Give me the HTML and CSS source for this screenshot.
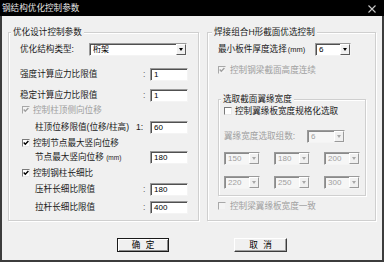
FILE: index.html
```html
<!DOCTYPE html>
<html lang="zh-CN">
<head>
<meta charset="utf-8">
<title>钢结构优化控制参数</title>
<link rel="stylesheet" href="styles.css">
</head>
<body>
<div class="window">
  <div class="titlebar">
    <span class="title">钢结构优化控制参数</span>
    <svg class="close" viewBox="0 0 8 8"><path d="M0.5 0.5L7.5 7.5M7.5 0.5L0.5 7.5" stroke="#c8c8c8" stroke-width="1.1" fill="none"/></svg>
  </div>
  <div class="client">
    <div class="panels">
      <div class="group group-left">
        <div class="group-title gt-left">优化设计控制参数</div>
        <div class="row m5">
          <span class="lbl w-type">优化结构类型:</span>
          <div class="combo combo-type"><span class="combo-val">桁架</span><span class="combo-btn"><i class="tri"></i></span></div>
        </div>
        <div class="field m12"><span class="lbl">强度计算应力比限值</span><span class="sep">:</span><span class="input">1</span></div>
        <div class="field m8"><span class="lbl">稳定计算应力比限值</span><span class="sep">:</span><span class="input">1</span></div>
        <div class="cbrow m2 dis"><span class="cb cb-left dis-box"><svg viewBox="0 0 6 6"><path d="M0.7 2.6L2.3 4.3L5.4 1.1" stroke="#a0a0a0" stroke-width="1.4" fill="none"/></svg></span><span>控制柱顶侧向位移</span></div>
        <div class="field m5"><span class="lbl indent">柱顶位移限值(位移/柱高)</span><span class="sep sep-one">1:</span><span class="input">60</span></div>
        <div class="cbrow m3"><span class="cb cb-left"><svg viewBox="0 0 6 6"><path d="M0.7 2.6L2.3 4.3L5.4 1.1" stroke="#000" stroke-width="1.4" fill="none"/></svg></span><span>控制节点最大竖向位移</span></div>
        <div class="field m2"><span class="lbl indent">节点最大竖向位移 <span class="unit">(mm)</span></span><span class="sep"></span><span class="input">180</span></div>
        <div class="cbrow m3"><span class="cb cb-left"><svg viewBox="0 0 6 6"><path d="M0.7 2.6L2.3 4.3L5.4 1.1" stroke="#000" stroke-width="1.4" fill="none"/></svg></span><span>控制钢柱长细比</span></div>
        <div class="field m4"><span class="lbl indent">压杆长细比限值</span><span class="sep">:</span><span class="input">180</span></div>
        <div class="field m5"><span class="lbl indent">拉杆长细比限值</span><span class="sep">:</span><span class="input">400</span></div>
      </div>
      <div class="group group-right">
        <div class="group-title gt-right">焊接组合H形截面优选控制</div>
        <div class="row m5">
          <span class="lbl w-thick">最小板件厚度选择<span class="unit unit-r">(mm)</span></span>
          <div class="combo combo-thick"><span class="combo-val">6</span><span class="combo-btn"><i class="tri"></i></span></div>
        </div>
        <div class="cbrow m8 dis"><span class="cb dis-box"><svg viewBox="0 0 6 6"><path d="M0.7 2.6L2.3 4.3L5.4 1.1" stroke="#a0a0a0" stroke-width="1.4" fill="none"/></svg></span><span class="cbtext-r">控制钢梁截面高度连续</span></div>
        <div class="group inner m23">
          <div class="group-title gt-inner">选取截面翼缘宽度</div>
          <div class="cbrow"><span class="cb"></span><span>控制翼缘板宽度规格化选取</span></div>
          <div class="row m13 dis">
            <span class="lbl w-count">翼缘宽度选取组数:</span>
            <div class="combo dis-combo combo-count"><span class="combo-val">6</span><span class="combo-btn"><i class="tri"></i></span></div>
          </div>
          <div class="combos m9">
            <div class="combo dis-combo combo-sm"><span class="combo-val">150</span><span class="combo-btn"><i class="tri"></i></span></div>
            <div class="combo dis-combo combo-sm"><span class="combo-val">180</span><span class="combo-btn"><i class="tri"></i></span></div>
            <div class="combo dis-combo combo-sm"><span class="combo-val">200</span><span class="combo-btn"><i class="tri"></i></span></div>
          </div>
          <div class="combos m11">
            <div class="combo dis-combo combo-sm"><span class="combo-val">220</span><span class="combo-btn"><i class="tri"></i></span></div>
            <div class="combo dis-combo combo-sm"><span class="combo-val">250</span><span class="combo-btn"><i class="tri"></i></span></div>
            <div class="combo dis-combo combo-sm"><span class="combo-val">300</span><span class="combo-btn"><i class="tri"></i></span></div>
          </div>
        </div>
        <div class="cbrow m4 dis"><span class="cb dis-box"></span><span class="cbtext-r">控制梁翼缘板宽度一致</span></div>
      </div>
    </div>
    <div class="btns">
      <div class="btn btn-default">确 定</div>
      <div class="btn btn-normal">取 消</div>
    </div>
  </div>
</div>
</body>
</html>
```
FILE: styles.css
```css
html, body {
  margin: 0;
  padding: 0;
  background: #ffffff;
}
body {
  font-family: "Liberation Sans", "Noto Sans CJK SC", sans-serif;
  font-size: 8.6px;
  color: #1a1a1a;
}
.window {
  width: 384px;
  height: 262px;
  display: flex;
  flex-direction: column;
  background: #000;
}
.titlebar {
  height: 16px;
  box-sizing: border-box;
  display: flex;
  align-items: center;
  justify-content: space-between;
  padding: 0 8px 0 2px;
  color: #e4e4e4;
  line-height: 12px;
}
.close {
  width: 8px;
  height: 8px;
  margin-top: 1px;
}
.client {
  flex: 1;
  background: #f0f0f0;
  border: 2px solid #3c3c3c;
  border-top: 0;
  display: flex;
  flex-direction: column;
}
.panels {
  display: flex;
  gap: 8px;
  padding: 16px 0 0 6px;
}
.group {
  box-sizing: border-box;
  border: 1px solid #cfcfcf;
  box-shadow: inset 1px 1px 0 #fff, 1px 1px 0 #fff;
  display: flex;
  flex-direction: column;
  height: 189px;
}
.group-left {
  width: 191px;
  padding: 0 10px 0 11px;
}
.group-right {
  width: 169px;
  padding: 0 9px 0 10px;
}
.inner {
  width: 148px;
  height: 97px;
  padding: 0 0 0 5px;
}
.group-title {
  align-self: flex-start;
  margin-top: -6px;
  padding: 0 2px;
  line-height: 11px;
  background: #f0f0f0;
  white-space: nowrap;
}
.gt-left { margin-left: -9px; }
.gt-right { margin-left: -6px; }
.gt-inner { margin-left: -3px; }

.m2 { margin-top: 2px; }
.m3 { margin-top: 3px; }
.m4 { margin-top: 4px; }
.m5 { margin-top: 5px; }
.m8 { margin-top: 8px; }
.m9 { margin-top: 9px; }
.m11 { margin-top: 11px; }
.m12 { margin-top: 12px; }
.m13 { margin-top: 13px; }
.m23 { margin-top: 23px; }

.row {
  display: flex;
  align-items: center;
  height: 13px;
  white-space: nowrap;
}
.lbl {
  white-space: nowrap;
  line-height: 11px;
}
.unit {
  font-size: 6.5px;
}
.unit-r {
  font-size: 7.5px;
  margin-left: 1px;
}
.w-type { width: 69px; }
.w-thick { width: 97px; }
.w-count { width: 83px; }

.field {
  display: grid;
  grid-template-columns: 1fr 12px 38px;
  align-items: center;
  height: 13px;
}
.sep {
  padding-left: 5px;
  color: #666;
  line-height: 11px;
}
.sep-one {
  padding-left: 0;
  margin-left: -2px;
  color: #1a1a1a;
}
.indent { padding-left: 15px; }

.input {
  box-sizing: border-box;
  height: 13px;
  background: #fff;
  border: 1px solid;
  border-color: #9a9a9a #f4f4f4 #f4f4f4 #9a9a9a;
  box-shadow: inset 1px 1px 0 #505050;
  padding-left: 3px;
  font-size: 8px;
  line-height: 11px;
  color: #000;
}

.combo {
  box-sizing: border-box;
  height: 13px;
  display: flex;
  background: #fff;
  border: 1px solid;
  border-color: #9a9a9a #f4f4f4 #f4f4f4 #9a9a9a;
  box-shadow: inset 1px 1px 0 #505050;
}
.combo-type { width: 98px; }
.combo-thick { width: 36px; }
.combo-count { width: 38px; }
.combo-sm { width: 36px; }
.combo-val {
  flex: 1;
  padding-left: 3px;
  font-size: 8px;
  line-height: 11px;
  color: #000;
}
.combo-btn {
  width: 10px;
  box-sizing: border-box;
  background: #f0f0f0;
  border: 1px solid;
  border-color: #ffffff #5a5a5a #5a5a5a #ffffff;
  display: flex;
  align-items: center;
  justify-content: center;
}
.tri {
  width: 0;
  height: 0;
  border-left: 2.5px solid transparent;
  border-right: 2.5px solid transparent;
  border-top: 3px solid #000;
}
.dis-combo {
  background: #f6f6f6;
  box-shadow: inset 1px 1px 0 #8a8a8a;
}
.dis-combo .combo-val { color: #a0a0a0; }
.dis-combo .tri { border-top-color: #a8a8a8; }
.dis-combo .combo-btn { border-color: #ffffff #9a9a9a #9a9a9a #ffffff; }

.combos {
  display: flex;
  justify-content: space-between;
  width: 136px;
}

.cbrow {
  display: flex;
  align-items: center;
  height: 12px;
  gap: 3px;
  white-space: nowrap;
  line-height: 11px;
}
.cb {
  box-sizing: border-box;
  width: 8px;
  height: 8px;
  background: #fff;
  border: 1px solid;
  border-color: #7a7a7a #e8e8e8 #e8e8e8 #7a7a7a;
  display: flex;
}
.cb svg {
  width: 6px;
  height: 6px;
}
.cb-left { margin-left: 2px; }
.cbtext-r { margin-left: 1px; }
.dis { color: #a0a0a0; }
.dis-box {
  background: #f4f4f4;
  border-color: #a8a8a8 #f0f0f0 #f0f0f0 #a8a8a8;
}

.btns {
  display: flex;
  gap: 65px;
  padding-left: 115px;
  margin-top: 17px;
}
.btn {
  box-sizing: border-box;
  height: 14px;
  display: flex;
  align-items: center;
  justify-content: center;
  line-height: 11px;
  color: #000;
  word-spacing: 3px;
}
.btn-default {
  width: 52px;
  border: 1px solid #1a1a1a;
  box-shadow: inset 1px 1px 0 #fff, inset -1px -1px 0 #8a8a8a;
}
.btn-normal {
  width: 53px;
  border: 1px solid;
  border-color: #ffffff #3c3c3c #3c3c3c #ffffff;
  box-shadow: inset -1px -1px 0 #a0a0a0;
}
```
